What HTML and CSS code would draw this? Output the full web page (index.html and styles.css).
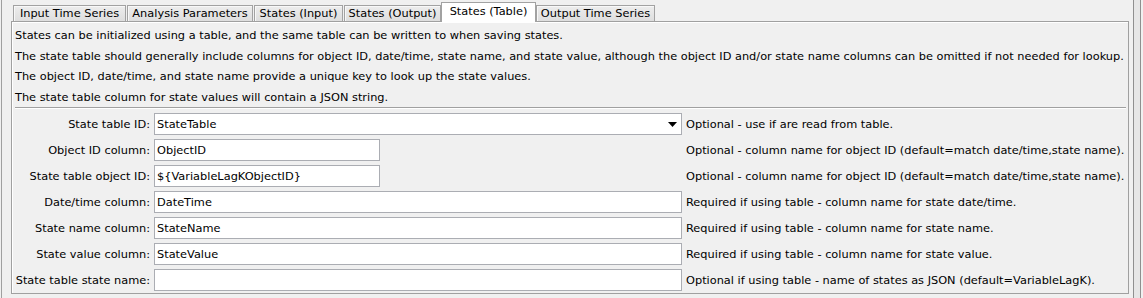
FILE: index.html
```html
<!DOCTYPE html>
<html>
<head>
<meta charset="utf-8">
<title>States (Table)</title>
<link rel="stylesheet" href="styles.css">
</head>
<body>
<div class="window">
  <div class="edge-left"></div>
  <div class="tabpane">
    <div class="tabs">
      <div class="tab t1">Input Time Series</div>
      <div class="tab t2">Analysis Parameters</div>
      <div class="tab t3">States (Input)</div>
      <div class="tab t4">States (Output)</div>
      <div class="tab t5 selected">States (Table)</div>
      <div class="tab t6">Output Time Series</div>
    </div>
    <div class="panel">
      <div class="info">
        <div class="line">States can be initialized using a table, and the same table can be written to when saving states.</div>
        <div class="line">The state table should generally include columns for object ID, date/time, state name, and state value, although the object ID and/or state name columns can be omitted if not needed for lookup.</div>
        <div class="line">The object ID, date/time, and state name provide a unique key to look up the state values.</div>
        <div class="line">The state table column for state values will contain a JSON string.</div>
      </div>
      <div class="separator"></div>
      <div class="form">
        <div class="label">State table ID:</div>
        <div class="field combo long"><span class="value">StateTable</span><svg class="arrow" width="9" height="5" viewBox="0 0 9 5"><polygon points="0,0 9,0 4.5,5" fill="#000"/></svg></div>
        <div class="desc">Optional - use if are read from table.</div>

        <div class="label">Object ID column:</div>
        <div class="field short"><span class="value">ObjectID</span></div>
        <div class="desc">Optional - column name for object ID (default=match date/time,state name).</div>

        <div class="label">State table object ID:</div>
        <div class="field short"><span class="value">${VariableLagKObjectID}</span></div>
        <div class="desc">Optional - column name for object ID (default=match date/time,state name).</div>

        <div class="label">Date/time column:</div>
        <div class="field long"><span class="value">DateTime</span></div>
        <div class="desc">Required if using table - column name for state date/time.</div>

        <div class="label">State name column:</div>
        <div class="field long"><span class="value">StateName</span></div>
        <div class="desc">Required if using table - column name for state name.</div>

        <div class="label">State value column:</div>
        <div class="field long"><span class="value">StateValue</span></div>
        <div class="desc">Required if using table - column name for state value.</div>

        <div class="label">State table state name:</div>
        <div class="field long"><span class="value"></span></div>
        <div class="desc">Optional if using table - name of states as JSON (default=VariableLagK).</div>
      </div>
    </div>
  </div>
  <div class="edge-right"></div>
</div>
</body>
</html>
```
FILE: styles.css
```css
html, body {
  margin: 0;
  padding: 0;
}
body {
  background: #f0f0f0;
  font-family: "DejaVu Sans", "Noto Sans", sans-serif;
  font-size: 11.35px;
  color: #000;
  width: 1143px;
  height: 298px;
  overflow: hidden;
}
.window {
  display: flex;
  height: 298px;
}
.edge-left {
  width: 1px;
  margin-left: 1px;
  margin-right: 9px;
  background: #a0a0a0;
}
.tabpane {
  width: 1118px;
  display: flex;
  flex-direction: column;
}
.tabs {
  display: flex;
  align-items: flex-end;
  height: 21px;
}
.tab {
  box-sizing: border-box;
  height: 16px;
  border: 1px solid #a2a2a2;
  border-bottom: none;
  background: linear-gradient(#ededed, #dedede);
  box-shadow: inset 1px 1px 0 #f8f8f8;
  text-align: center;
  line-height: 15px;
  white-space: nowrap;
  overflow: hidden;
}
.tab.selected {
  height: 20px;
  margin-bottom: -1px;
  background: #fff;
  box-shadow: none;
  line-height: 17px;
  position: relative;
  z-index: 1;
}
.t1 { margin-left: 2px; width: 113px; }
.t2 { margin-left: 1px; width: 126px; }
.t3 { margin-left: 1px; width: 89px; }
.t4 { margin-left: 1px; width: 97px; }
.t5 { margin-left: 0; width: 95px; }
.t6 { margin-left: 0; width: 119px; }
.panel {
  box-sizing: border-box;
  height: 273px;
  border: 1px solid #a0a0a0;
  box-shadow: inset 1px 1px 0 #fff;
  background: #f0f0f0;
}
.info {
  padding: 3px 3px 0 3px;
}
.line {
  height: 20.5px;
  line-height: 20.5px;
  white-space: nowrap;
}
.separator {
  height: 1px;
  margin: 0 2px 0 3px;
  background: #a0a0a0;
  border-bottom: 1px solid #fff;
}
.form {
  margin-top: 4px;
  display: grid;
  grid-template-columns: 138px 528px 1fr;
  grid-auto-rows: 22px;
  column-gap: 4px;
  row-gap: 4px;
  align-items: center;
}
.label {
  text-align: right;
  white-space: nowrap;
}
.desc {
  white-space: nowrap;
}
.field {
  box-sizing: border-box;
  height: 22px;
  border: 1px solid #abadb3;
  background: #fff;
  padding-left: 2px;
  line-height: 20px;
  display: flex;
  align-items: center;
  white-space: nowrap;
}
.field.short {
  width: 226px;
}
.field.long {
  width: 528px;
}
.value {
  flex: 1;
}
.combo .arrow {
  margin-right: 4px;
  margin-top: 1px;
}
.edge-right {
  width: 6px;
  margin-left: 4px;
  border-left: 1px solid #8f8f8f;
  border-right: 1px solid #8f8f8f;
  background: #e6e6e6;
}
```
